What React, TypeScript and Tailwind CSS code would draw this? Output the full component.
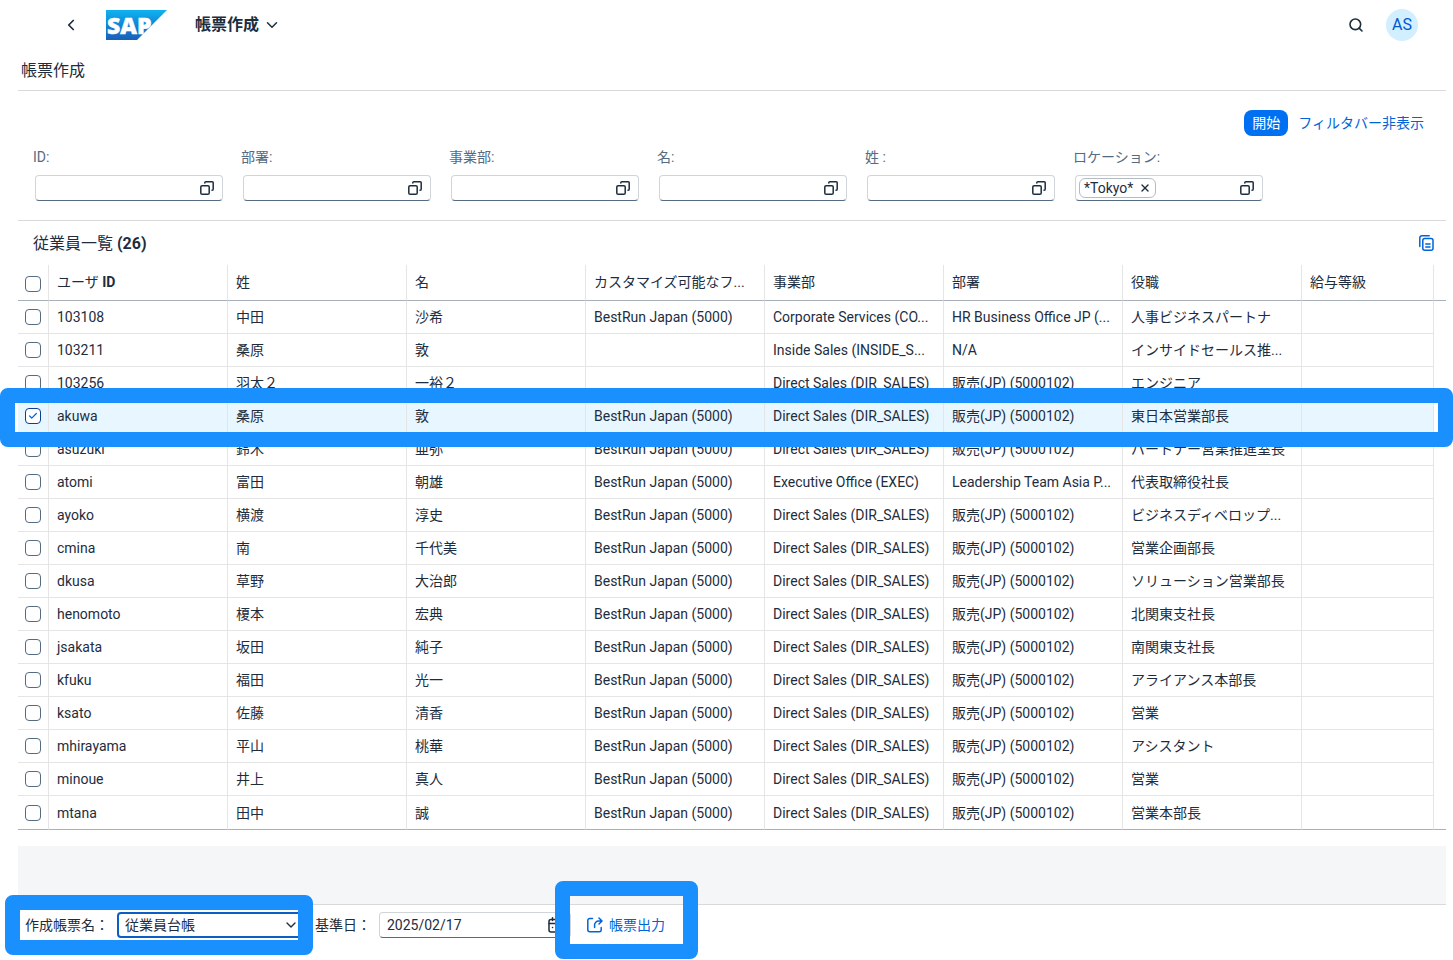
import { useState } from "react"
import { Check, ChevronDown, ChevronLeft, Search, X } from "lucide-react"

interface Employee {
  userId: string
  lastName: string
  firstName: string
  company: string
  division: string
  department: string
  title: string
}

const company = "BestRun Japan (5000)"
const division = "Direct Sales (DIR_SALES)"
const department = "販売(JP) (5000102)"

const employees: Employee[] = [
  { userId: "103108", lastName: "中田", firstName: "沙希", company, division: "Corporate Services (CO...", department: "HR Business Office JP (...", title: "人事ビジネスパートナ" },
  { userId: "103211", lastName: "桑原", firstName: "敦", company: "", division: "Inside Sales (INSIDE_S...", department: "N/A", title: "インサイドセールス推..." },
  { userId: "103256", lastName: "羽太２", firstName: "一裕２", company: "", division, department, title: "エンジニア" },
  { userId: "akuwa", lastName: "桑原", firstName: "敦", company, division, department, title: "東日本営業部長" },
  { userId: "asuzuki", lastName: "鈴木", firstName: "亜弥", company, division, department, title: "パートナー営業推進室長" },
  { userId: "atomi", lastName: "富田", firstName: "朝雄", company, division: "Executive Office (EXEC)", department: "Leadership Team Asia P...", title: "代表取締役社長" },
  { userId: "ayoko", lastName: "横渡", firstName: "淳史", company, division, department, title: "ビジネスディベロップ..." },
  { userId: "cmina", lastName: "南", firstName: "千代美", company, division, department, title: "営業企画部長" },
  { userId: "dkusa", lastName: "草野", firstName: "大治郎", company, division, department, title: "ソリューション営業部長" },
  { userId: "henomoto", lastName: "榎本", firstName: "宏典", company, division, department, title: "北関東支社長" },
  { userId: "jsakata", lastName: "坂田", firstName: "純子", company, division, department, title: "南関東支社長" },
  { userId: "kfuku", lastName: "福田", firstName: "光一", company, division, department, title: "アライアンス本部長" },
  { userId: "ksato", lastName: "佐藤", firstName: "清香", company, division, department, title: "営業" },
  { userId: "mhirayama", lastName: "平山", firstName: "桃華", company, division, department, title: "アシスタント" },
  { userId: "minoue", lastName: "井上", firstName: "真人", company, division, department, title: "営業" },
  { userId: "mtana", lastName: "田中", firstName: "誠", company, division, department, title: "営業本部長" },
]

const filters = [
  { id: "id", label: "ID:" },
  { id: "department", label: "部署:" },
  { id: "division", label: "事業部:" },
  { id: "firstName", label: "名:" },
  { id: "lastName", label: "姓 :" },
  { id: "location", label: "ロケーション:" },
]

const columns = ["姓", "名", "カスタマイズ可能なフ...", "事業部", "部署", "役職"]

function SapLogo() {
  return (
    <svg width="61" height="30" viewBox="0 0 61 30" role="img" aria-label="SAP" className="overflow-visible">
      <defs>
        <linearGradient id="sap" x1="0" y1="0" x2="0" y2="1">
          <stop offset="0" stopColor="#0fb2ee" />
          <stop offset="0.5" stopColor="#1086d6" />
          <stop offset="1" stopColor="#1b5fb8" />
        </linearGradient>
      </defs>
      <path d="M0 0H61L31 30H0Z" fill="url(#sap)" />
      <text x="1" y="24" fill="#fff" stroke="#fff" strokeWidth="0.5" fontFamily="Open Sans" fontWeight="800" fontSize="23">SAP</text>
    </svg>
  )
}

function ValueHelpIcon() {
  return (
    <svg width="14" height="14" viewBox="0 0 14 14" fill="none" stroke="currentColor" strokeWidth="1.5" strokeLinecap="round" strokeLinejoin="round">
      <rect x="0.8" y="4.8" width="8.4" height="8.4" rx="1.3" />
      <path d="M4.8 2V1.8a1 1 0 0 1 1-1h6.4a1 1 0 0 1 1 1v6.4a1 1 0 0 1-1 1H12" />
    </svg>
  )
}

function CopyIcon() {
  return (
    <svg width="15" height="16" viewBox="0 0 15 16" fill="none" stroke="currentColor" strokeWidth="1.5" strokeLinecap="round">
      <path d="M0.8 11.5V2.8a2 2 0 0 1 2-2h7.4" />
      <rect x="3.8" y="3.4" width="10.2" height="11.8" rx="2" />
      <path d="M6.8 9H11M6.8 12H11" />
    </svg>
  )
}

function ExportIcon() {
  return (
    <svg width="16" height="16" viewBox="0 0 16 16" fill="none" stroke="currentColor" strokeWidth="1.5" strokeLinecap="round" strokeLinejoin="round">
      <path d="M5.5 1.5H2.8a2 2 0 0 0-2 2v9.2a2 2 0 0 0 2 2h9.4a2 2 0 0 0 2-2v-2.2" />
      <path d="M12 1l3 3-3 3M14.8 4H11.6a4 4 0 0 0-4 4v2.4" />
    </svg>
  )
}

function CalendarIcon() {
  return (
    <svg width="16" height="16" viewBox="0 0 16 16" fill="none" stroke="currentColor" strokeWidth="1.5" strokeLinecap="round">
      <rect x="1" y="2.5" width="14" height="12.5" rx="2" />
      <path d="M1 6.5H15M4.5 0.8V3.5M11.5 0.8V3.5M4.5 10.5h.1M8 10.5h.1M11.5 10.5h.1" />
    </svg>
  )
}

interface TickBoxProps {
  label: string
  checked: boolean
  onChange: () => void
}

function TickBox({ label, checked, onChange }: TickBoxProps) {
  return (
    <span className="relative ml-[7px] block h-4 w-4">
      <input
        type="checkbox"
        aria-label={label}
        checked={checked}
        onChange={onChange}
        className="block h-4 w-4 appearance-none rounded border border-[#556b82] bg-white checked:border-[#0b3f93]"
      />
      {checked && <Check className="pointer-events-none absolute inset-0 m-auto h-2.5 w-2.5 text-[#0064d9]" strokeWidth={3} />}
    </span>
  )
}

export default function App() {
  const [selected, setSelected] = useState<string[]>(["akuwa"])
  const [values, setValues] = useState<Record<string, string>>({})
  const [showFilters, setShowFilters] = useState(true)
  const [location, setLocation] = useState("*Tokyo*")
  const [report, setReport] = useState("従業員台帳")
  const [date, setDate] = useState("2025/02/17")

  const allSelected = selected.length === employees.length

  const toggle = (userId: string) => {
    setSelected(selected.includes(userId) ? selected.filter((id) => id !== userId) : [...selected, userId])
  }

  return (
    <div className="min-h-screen bg-white font-[Roboto,'Noto_Sans_CJK_JP',sans-serif] text-sm text-[#1d2d3e]">
      <header className="flex h-[50px] items-center pr-[35px] pl-[62px]">
        <button type="button" aria-label="戻る">
          <ChevronLeft className="h-[18px] w-[18px]" strokeWidth={2.3} />
        </button>
        <a href="#" className="ml-[26px]">
          <SapLogo />
        </a>
        <button type="button" className="ml-7 flex items-center gap-1 text-base font-bold">
          帳票作成
          <ChevronDown className="h-[18px] w-[18px]" />
        </button>
        <button type="button" aria-label="検索" className="ml-auto">
          <Search className="h-4 w-4" strokeWidth={2.4} />
        </button>
        <button type="button" className="ml-[22px] h-8 w-8 rounded-full bg-[#d1efff] text-base text-[#0057d2]">AS</button>
      </header>

      <main className="pr-[7px] pl-[18px]">
        <h1 className="h-[41px] border-b border-[#d9d9d9] pt-px pl-[3px] text-base leading-10">帳票作成</h1>

        <div className="flex justify-end gap-2.5 pt-[19px] pr-[22px]">
          <button type="button" className="h-[26px] rounded-lg bg-[#0070f2] px-2 text-white">開始</button>
          <button type="button" className="text-[#0064d9]" onClick={() => setShowFilters(!showFilters)}>
            フィルタバー非表示
          </button>
        </div>

        {showFilters && (
          <div className="flex flex-wrap pt-[11px] pb-[19px] pl-[15px]">
            {filters.map((filter) => (
              <div key={filter.id} className="w-[208px]">
                <label htmlFor={filter.id} className="block h-7 leading-5 text-[#556b82]">{filter.label}</label>
                <div className="mr-[18px] ml-0.5 flex h-[26px] items-center rounded border border-[#d0d5da] border-b-[#556b82] pr-2 pl-[3px]">
                  {filter.id === "location" && location && (
                    <span className="flex h-5 shrink-0 items-center gap-1.5 rounded-md border border-[#b3bcc5] px-1">
                      {location}
                      <button type="button" aria-label="削除" onClick={() => setLocation("")}>
                        <X className="h-3 w-3" strokeWidth={2.8} />
                      </button>
                    </span>
                  )}
                  <input
                    id={filter.id}
                    type="text"
                    value={values[filter.id] ?? ""}
                    onChange={(e) => setValues({ ...values, [filter.id]: e.target.value })}
                    className="h-full w-0 min-w-0 flex-1 px-1 outline-none"
                  />
                  <button type="button" aria-label="値を選択">
                    <ValueHelpIcon />
                  </button>
                </div>
              </div>
            ))}
          </div>
        )}

        <div className="flex h-[45px] items-center justify-between border-t border-[#d9d9d9] pr-3 pl-[15px]">
          <h2 className="pt-0.5 text-base">
            従業員一覧 <span className="font-bold">(26)</span>
          </h2>
          <button type="button" aria-label="コピー" className="text-[#0064d9]">
            <CopyIcon />
          </button>
        </div>

        <table className="w-full table-fixed border-separate border-spacing-0 text-left whitespace-nowrap">
          <colgroup>
            <col className="w-[31px]" />
            <col className="w-[179px]" />
            {columns.map((column) => (
              <col key={column} className="w-[179px]" />
            ))}
            <col />
            <col className="w-3" />
          </colgroup>
          <thead>
            <tr className="h-9 *:border-b *:border-b-[#a8b1ba] *:font-normal [&>th]:border-r [&>th]:border-r-[#e5e5e5]">
              <th className="px-0 pt-0.5 pb-0">
                <TickBox
                  label="すべて選択"
                  checked={allSelected}
                  onChange={() => setSelected(allSelected ? [] : employees.map((employee) => employee.userId))}
                />
              </th>
              <th className="px-2 pt-0 pb-0.5">
                ユーザ <span className="font-bold">ID</span>
              </th>
              {columns.map((column) => (
                <th key={column} className="overflow-hidden px-2 pt-0 pb-0.5">{column}</th>
              ))}
              <th className="px-2 pt-0 pb-0.5">給与等級</th>
              <td className="p-0" />
            </tr>
          </thead>
          <tbody className="[&>tr:last-child]:h-[34px] [&>tr:last-child>td]:border-b-[#a8b1ba]">
            {employees.map((employee) => {
              const cells = [
                employee.userId,
                employee.lastName,
                employee.firstName,
                employee.company,
                employee.division,
                employee.department,
                employee.title,
                "",
              ]
              const isSelected = selected.includes(employee.userId)
              return (
                <tr key={employee.userId} className="relative h-[33px]">
                  <td className={`border-r border-b border-[#e5e5e5] p-0 ${isSelected ? "bg-[#e8f7ff]" : ""}`}>
                    <TickBox label={employee.userId} checked={isSelected} onChange={() => toggle(employee.userId)} />
                  </td>
                  {cells.map((cell, index) => (
                    <td
                      key={index}
                      className={`overflow-hidden border-r border-b border-[#e5e5e5] px-2 py-0 ${isSelected ? "bg-[#e8f7ff]" : ""}`}
                    >
                      {cell}
                    </td>
                  ))}
                  <td className="border-b border-transparent p-0">
                    {employee.userId === "akuwa" && (
                      <div className="pointer-events-none absolute -top-3 -right-[7px] -bottom-3.5 -left-[18px] z-10 rounded-lg border-15 border-[#1a90ff]" />
                    )}
                  </td>
                </tr>
              )
            })}
          </tbody>
        </table>

        <div className="mt-4 h-[58px] bg-[#f5f6f7]" />
      </main>

      <footer className="mr-[7px] ml-[18px] flex h-[55px] border-t border-[#d9d9d9] pt-[7px] pl-[7px]">
        <div className="relative flex h-[26px] items-center">
          <label htmlFor="report" className="w-[92px]">作成帳票名：</label>
          <div className="relative h-full w-[188px]">
            <select
              id="report"
              value={report}
              onChange={(e) => setReport(e.target.value)}
              className="h-full w-full appearance-none rounded border-2 border-[#0a5fc4] bg-white px-1.5 outline-none"
            >
              <option>従業員台帳</option>
            </select>
            <ChevronDown className="pointer-events-none absolute top-[5px] right-1.5 h-4 w-4" />
          </div>
          <div className="pointer-events-none absolute -inset-y-[17px] -right-2 -left-5 rounded-lg border-15 border-[#1a90ff]" />
        </div>

        <div className="ml-2.5 flex h-[26px] items-center">
          <label htmlFor="date" className="w-16">基準日：</label>
          <div className="flex h-full w-48 items-center rounded border border-[#d0d5da] border-b-[#556b82] pr-1.5 pl-[7px]">
            <input id="date" type="text" value={date} onChange={(e) => setDate(e.target.value)} className="min-w-0 flex-1 outline-none" />
            <button type="button" aria-label="カレンダー">
              <CalendarIcon />
            </button>
          </div>
        </div>

        <div className="relative h-[26px]">
          <button type="button" className="flex h-full items-center gap-1.5 px-4 text-[#0064d9]">
            <ExportIcon />
            帳票出力
          </button>
          <div className="pointer-events-none absolute -top-[31px] -right-[17px] -bottom-[21px] -left-4 rounded-lg border-15 border-[#1a90ff]" />
        </div>
      </footer>
    </div>
  )
}
